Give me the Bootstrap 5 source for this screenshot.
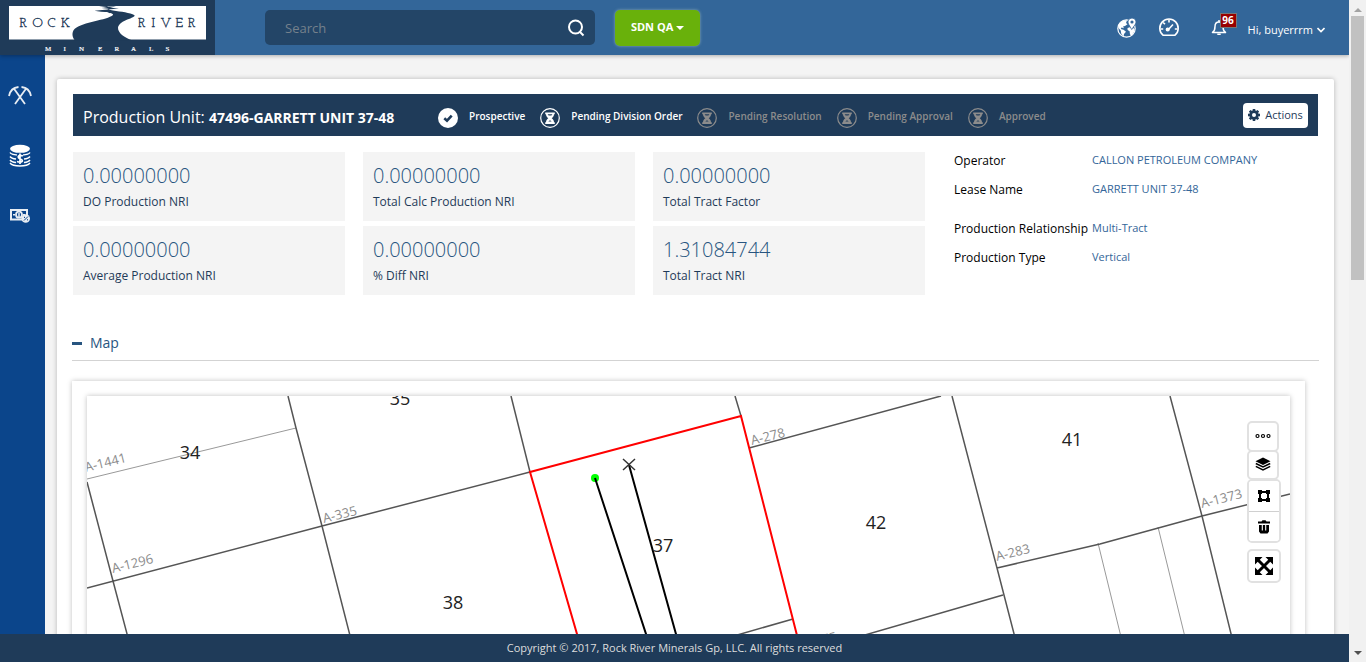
<!DOCTYPE html>
<html lang="en">
<head>
<meta charset="utf-8">
<meta name="viewport" content="width=device-width, initial-scale=1">
<title>Rock River Minerals</title>
<link href="https://cdn.jsdelivr.net/npm/bootstrap@5.3.0/dist/css/bootstrap.min.css" rel="stylesheet">
<style>
body{font-family:"Open Sans",sans-serif;font-size:12px;line-height:18px;color:#000;background:#f4f4f4}
a{text-decoration:none}
svg{display:block}
.topbar{height:55px;background:#369;box-shadow:0 1px 4px rgba(0,0,0,.3);z-index:2}
.brand-box{width:215px;background:#1f3b59}
.search-box{width:330px;height:35px;margin-left:50px;background:#234567;border-radius:5px}
.search-box input{font-size:13px;line-height:18px;color:#fff;padding:0 0 0 20px}
.search-box input::placeholder{color:#75818c;opacity:1}
.org-btn{width:85px;height:36px;margin-left:20px;background:#69b10b;color:#fff;font-size:11px;font-weight:700;border-radius:5px;box-shadow:0 0 3px rgba(200,220,200,.6);padding:0}
.org-btn:hover{background:#5c9c09;color:#fff}
.tools{margin-right:24px}
.tools svg{color:#fff}
.gauge{margin-left:20px}
.bell{margin-left:31px}
.count{position:absolute;left:9px;top:-6px;width:17px;height:15px;background:#900;border:1px solid #777;color:#fff;font-size:10px;line-height:13px;font-weight:700;text-align:center}
.user-btn{margin-left:21px;color:#fff;font-size:11px;line-height:20px}
.sidebar{width:45px;background:#0b458b;padding:29px 5px 0 0;gap:37px}
.content{padding:24px 15px 0 12px}
.panel{background:#fff;border-radius:2px;box-shadow:0 0 5px rgba(0,0,0,.25);padding:15px 15px 40px}
.unit-bar{height:42px;margin:0 1px;padding:0 10px;background:#1f3b59;color:#fff}
.unit-title{width:355px;padding-top:4px;font-size:16px;line-height:24px;font-weight:400}
.unit-title strong{font-size:14px}
.stages{gap:15px;padding-top:6px;font-size:10px;font-weight:600}
.stage{gap:11px;color:#fff}
.stage span{margin-top:-4px}
.stage.waiting{color:#8c8c8c}
.act-btn{width:65px;height:25px;background:#fff;color:#1f3b59;font-size:11px;border-radius:4px;padding:0;gap:5px}
.metrics{display:grid;grid-template-columns:repeat(3,1fr);gap:5px 18px}
.metric{height:69px;background:#f4f4f4;padding:12px 10px}
.metric b{display:block;font-size:20px;line-height:24px;font-weight:300;color:#285580}
.metric span{display:block;line-height:18px;margin-top:5px;color:#1f3b59}
.summary{margin:16px 1px 0}
.info{width:364px;margin-left:29px}
.info dl{display:grid;grid-template-columns:138px 1fr;grid-auto-rows:29px;margin:0 0 10px}
.info dt{font-weight:400;white-space:nowrap}
.info dd{margin:0;font-size:11px;line-height:16px}
.info a{color:#369}
.section-head{margin-top:38px;height:28px;border-bottom:1px solid #d3d3d3}
.section-head button{font-size:14px;line-height:20px;color:#285580;gap:8px}
.map-card{margin:20px 14px 0 0;padding:15px;background:#fff;box-shadow:0 0 5px rgba(0,0,0,.25)}
.map-view{height:400px;box-shadow:0 0 5px rgba(0,0,0,.25);overflow:hidden}
.map-view > svg{width:100%;height:100%}
.map-tools{position:absolute;right:9px;top:25px;width:34px}
.map-tools button{background:#fff;border:2px solid #e1e1e1;border-radius:5px;padding:0;height:31px;color:#000;display:flex;align-items:center;justify-content:center;width:32px}
.map-tools .m-layers{height:30px;margin-top:-2px}
.map-tools .m-group{border:2px solid #e1e1e1;border-radius:5px;overflow:hidden;background:#fff;width:34px;margin-top:-1px}
.map-tools .m-group button{border:0;border-radius:0;height:30px;width:30px}
.map-tools .m-group button + button{border-top:1px solid #d0d0d0}
.map-tools .m-full{height:34px;width:34px;margin-top:6px}
.copy-bar{height:28px;background:#1f3b59;color:#ddd;font-size:11px;z-index:2}
.track{width:17px;background:#f1f1f1;padding:7px 2px}
.thumb{height:264px;width:13px;background:#c1c1c1}
.l-main{stroke:#555;stroke-width:1.5;fill:none}
.l-thin{stroke:#999;stroke-width:1;fill:none}
.l-unit{stroke:#f00;stroke-width:2;fill:none}
.l-well{stroke:#000;stroke-width:2;fill:none}
.t-sec{font-size:18px;fill:#222;text-anchor:middle}
.t-abs{font-size:13px;fill:#8c8c8c}
</style>
</head>
<body class="d-flex vh-100 overflow-hidden">
<svg width="0" height="0" class="position-absolute" aria-hidden="true">
  <symbol id="hourglass" viewBox="0 0 20 20">
    <circle cx="10" cy="10" r="9.3" fill="none" stroke="currentColor" stroke-width="1.2"/>
    <path d="M5.200 4.500h9.600v1.800h-.8c0 2-1 2.900-2.300 3.900 1.300 1 2.300 2 2.300 4h.8v1.800H5.200v-1.800H6c0-2 1-3 2.300-4C7 9.200 6 8.300 6 6.300h-.8z" fill="currentColor"/>
    <path d="M7.600 6.300h4.800L11.400 7.600H8.600zM8.300 13.600l1.700-1.300 1.700 1.300z" fill="#1f3b59"/>
  </symbol>
</svg>

<div class="d-flex flex-column flex-fill overflow-hidden">
  <header class="topbar d-flex align-items-center position-relative flex-shrink-0">
    <a href="#" class="brand-box h-100" aria-label="Rock River Minerals">
      <svg width="215" height="55" viewBox="0 0 215 55">
        <path d="M9 6h197v33.500H9z" fill="#fff"/>
        <path d="M99 6.800l8-.8 1 .5h8l-6 1.200 9 .9-11 1 5 .8c8 1.300 17 2 21.500 4.800 1.500 3-15 4.500-16.500 12.300-.3 5 6 10.500 15 13H75c-3-3-3.500-8.500-.5-11.500C83 21.500 107 20.500 113 15c.5-1.500-3-2-6-2.200l2-.8c-5-.2-11-.3-14.500-1.300l13-1.200 1-.7-7-.7 6-.8z" fill="#1f3b59"/>
        <g font-family="'Josefin Slab','Liberation Serif',serif" fill="#1f3b59" stroke="#1f3b59" stroke-width=".4" font-size="13"><text y="27" x="19.500 32.500 47.500 61">ROCK</text><text y="27" x="138 151.500 160.500 175.500 188">RIVER</text></g>
        <text font-family="'Liberation Serif',serif" font-size="7" fill="#fff" stroke="#fff" stroke-width=".2" y="51" x="45 63.500 79 98 114.500 131 149 165.500">MINERALS</text>
      </svg>
    </a>
    <form class="search-box d-flex align-items-center">
      <input type="text" class="border-0 bg-transparent flex-fill" style="outline:0" placeholder="Search" aria-label="Search">
      <button type="button" class="btn p-0 border-0 me-2" aria-label="Run search">
        <svg width="22" height="22" viewBox="0 0 22 22" fill="none" stroke="#fff" stroke-width="2"><circle cx="10.500" cy="10" r="6.500"/><path d="M14.500 14.500l4 4"/></svg>
      </button>
    </form>
    <button type="button" class="btn org-btn border-0">SDN QA <svg class="d-inline" width="8" height="4" viewBox="0 0 8 4"><path d="M0 0h8L4 4z" fill="#fff"/></svg></button>
    <div class="tools d-flex align-items-center ms-auto">
      <a href="#" aria-label="Map explorer"><svg width="22" height="22" viewBox="0 0 22 22"><circle cx="10.500" cy="11.500" r="8.700" fill="none" stroke="currentColor" stroke-width="1.200"/><path d="M2.500 8C4.500 4.500 8 2.800 11 3.500l-1 2.500 1.500 1.200L9 9l-2 .6 1 1.600-2.500-.7-.7 1.500 2.700.8 2.500 2-2 2.200-.4 2.800-2.300-3-.6-3.300-2.200-2.500zM11.500 11l4-1.300 3 2.300-.5 3-2.200 3.500-1.800-1-.4-3.200-2-1.300z" fill="currentColor"/><path d="M15.700 12.500L12.500 7a4 4 0 1 1 7 0z" fill="currentColor" stroke="#369" stroke-width=".8"/><circle cx="16" cy="5" r="1.600" fill="#369"/></svg></a>
      <a href="#" class="gauge" aria-label="Dashboard"><svg width="22" height="22" viewBox="0 0 22 22" fill="none" stroke="currentColor" stroke-width="1.600"><path d="M5 18.200a9.200 9.200 0 1 1 12 0z"/><path d="M11 2.500v3M5 5.500l2 1.700M2.500 12h2.700M19.500 12h-2.700M9.500 13.500L15 7.500"/><circle cx="9.700" cy="12.500" r="1.300" fill="currentColor"/></svg></a>
      <a href="#" class="bell position-relative" aria-label="Notifications, 96 new"><svg width="16" height="18" viewBox="0 0 16 18"><path d="M1.500 13.500c2-1.300 2.500-3 2.500-6C4 4.500 5.500 3 8 3s4 1.500 4 4.500c0 3 .5 4.700 2.500 6z" fill="none" stroke="currentColor" stroke-width="1.500" stroke-linejoin="round"/><path d="M8 1v2M6.300 15.200h3.400" stroke="currentColor" stroke-width="1.500"/></svg><span class="count">96</span></a>
      <button type="button" class="btn user-btn border-0 p-0 pt-1 d-flex align-items-center gap-1">Hi, buyerrrm <svg width="8" height="6" viewBox="0 0 8 6" fill="none" stroke="currentColor" stroke-width="1.600"><path d="M.5 1L4 4.500 7.500 1"/></svg></button>
    </div>
  </header>

  <div class="d-flex flex-fill overflow-hidden">
    <nav class="sidebar d-flex flex-column align-items-center flex-shrink-0" aria-label="Main">
      <a href="#" aria-label="Production"><svg width="24" height="23" viewBox="0 0 24 23" fill="none" stroke="#e8edf3" stroke-width="1.800"><path d="M5.500 4l11.500 16M18.500 4L7 20"/><path d="M1 12C2 7 5 3.500 10.500 3M23 12C22 7 19 3.500 13.500 3"/></svg></a>
      <a href="#" aria-label="Revenue"><svg width="22" height="23" viewBox="0 0 22 23"><ellipse cx="11" cy="4.800" rx="10" ry="4" fill="#fff"/><path d="M1 8.500c1 2 5 2.500 10 2.500s9-.5 10-2.500M1 12.500c1 1.500 3 2.200 6 2.500M21 12.500c-1 1.500-3 2.200-6 2.500M1 16c1 1.500 3 2.200 6 2.500M21 16c-1 1.500-3 2.200-6 2.500M1 19c2 2.500 6 3 10 3s8-.5 10-3" fill="none" stroke="#fff" stroke-width="1.400"/><path d="M8 9.500h6v10.500H8z" fill="#0b458b"/><path d="M13.800 12c-4-2-6.300 1.300-2.800 2.800 4.500 1.500 2 4.700-3 2.700M11 9.500v10.500" stroke="#fff" stroke-width="1.700" fill="none"/></svg></a>
      <a href="#" aria-label="Payments"><svg width="20" height="23" viewBox="0 0 20 23"><path d="M1 6h16v9.500H1z" fill="none" stroke="#e8edf3" stroke-width="2"/><circle cx="9" cy="10.700" r="3" fill="none" stroke="#e8edf3" stroke-width="1.800"/><path d="M9 9v4M3 10.700h2M13 10.700h2" stroke="#e8edf3" stroke-width="1.500"/><circle cx="15.700" cy="14.500" r="4.300" fill="#e8edf3"/><path d="M14 16.500l4-4M14.500 12.800v1.200M17.500 15.200v1.200" stroke="#0b458b"/></svg></a>
    </nav>

    <main class="content flex-fill overflow-hidden">
      <div class="panel">
        <div class="unit-bar d-flex align-items-center">
          <h1 class="unit-title mb-0 flex-shrink-0">Production Unit: <strong>47496-GARRETT UNIT 37-48</strong></h1>
          <div class="stages d-flex align-items-center text-nowrap">
            <div class="stage d-flex align-items-center"><svg width="20" height="20" viewBox="0 0 20 20"><circle cx="10" cy="10" r="10" fill="#fff"/><path d="M6.300 10.200L9 12.600l4.700-5" fill="none" stroke="#1f3b59" stroke-width="2.600"/></svg><span>Prospective</span></div>
            <div class="stage d-flex align-items-center"><svg width="20" height="20"><use href="#hourglass"/></svg><span>Pending Division Order</span></div>
            <div class="stage waiting d-flex align-items-center"><svg width="20" height="20"><use href="#hourglass"/></svg><span>Pending Resolution</span></div>
            <div class="stage waiting d-flex align-items-center"><svg width="20" height="20"><use href="#hourglass"/></svg><span>Pending Approval</span></div>
            <div class="stage waiting d-flex align-items-center"><svg width="20" height="20"><use href="#hourglass"/></svg><span>Approved</span></div>
          </div>
          <button type="button" class="btn act-btn border-0 ms-auto d-flex align-items-center justify-content-center">
            <svg width="12" height="12" viewBox="0 0 12 12"><g fill="#1f3b59"><circle cx="6" cy="6" r="4.500"/><path id="tooth" d="M4.800 0h2.400l.4 2.500H4.400zM4.400 9.500h3.200L7.200 12H4.800z"/><use href="#tooth" transform="rotate(45 6 6)"/><use href="#tooth" transform="rotate(90 6 6)"/><use href="#tooth" transform="rotate(135 6 6)"/></g><circle cx="6" cy="6" r="2" fill="#fff"/></svg>Actions</button>
        </div>

        <div class="summary d-flex">
          <div class="metrics flex-fill">
            <div class="metric"><b>0.00000000</b><span>DO Production NRI</span></div>
            <div class="metric"><b>0.00000000</b><span>Total Calc Production NRI</span></div>
            <div class="metric"><b>0.00000000</b><span>Total Tract Factor</span></div>
            <div class="metric"><b>0.00000000</b><span>Average Production NRI</span></div>
            <div class="metric"><b>0.00000000</b><span>% Diff NRI</span></div>
            <div class="metric"><b>1.31084744</b><span>Total Tract NRI</span></div>
          </div>
          <div class="info flex-shrink-0">
            <dl><dt>Operator</dt><dd><a href="#">CALLON PETROLEUM COMPANY</a></dd><dt>Lease Name</dt><dd><a href="#">GARRETT UNIT 37-48</a></dd></dl>
            <dl><dt>Production Relationship</dt><dd><a href="#">Multi-Tract</a></dd><dt>Production Type</dt><dd><a href="#">Vertical</a></dd></dl>
          </div>
        </div>

        <div class="section-head">
          <button type="button" class="btn border-0 p-0 d-flex align-items-center"><svg width="10" height="3"><path d="M0 0h10v3H0z" fill="#285580"/></svg>Map</button>
        </div>

        <div class="map-card">
          <div class="map-view position-relative">
            <svg viewBox="87 396 1203 400" preserveAspectRatio="xMinYMin slice" role="img" aria-label="Tract map">
              <g class="l-thin"><path d="M87 479L296 428M1098 543L1160 796M1158 527L1224 796"/></g>
              <g class="l-main"><path d="M288 396L296 428 322 526 391 796M87 482L113 581 170 796M87 588L322 526 530 472M511 396L530 472M735 396L741 416M749 448L941 396M650 660L793 619M820 648L1003 595M952 396L997 568 1056 796M997 568L1100 544 1202 516 1290 494M1170 396L1202 516 1271 796"/></g>
              <g class="t-abs">
                <text transform="translate(86 472) rotate(-14)">A-1441</text>
                <text transform="translate(113 573) rotate(-14)">A-1296</text>
                <text transform="translate(324 523) rotate(-14)">A-335</text>
                <text transform="translate(752 445) rotate(-14)">A-278</text>
                <text transform="translate(997 561) rotate(-14)">A-283</text>
                <text transform="translate(1202 508) rotate(-14)">A-1373</text>
                <text transform="translate(804 649) rotate(-14)">A-275</text>
              </g>
              <path class="l-unit" d="M624 796L530 472 741 416 838 796"/>
              <circle cx="595" cy="478" r="4" fill="#0f0"/>
              <path class="l-well" d="M595 478L699 796M629 465L721 796"/>
              <path d="M623 459l12 11M635 459l-12 11" stroke="#333" stroke-width="1.500"/>
              <g class="t-sec">
                <text x="190" y="459">34</text><text x="400" y="405">35</text><text x="453" y="609">38</text>
                <text x="663" y="552">37</text><text x="876" y="529">42</text><text x="1072" y="446">41</text>
              </g>
            </svg>
            <div class="map-tools">
              <button type="button" aria-label="More"><svg width="16" height="8" viewBox="0 0 16 8" fill="none" stroke="#000" stroke-width="1.200"><circle cx="2.500" cy="3" r="1.500"/><circle cx="8" cy="3" r="1.500"/><circle cx="13.500" cy="3" r="1.500"/></svg></button>
              <button type="button" class="m-layers" aria-label="Layers"><svg width="16" height="16" viewBox="0 0 16 16"><path d="M8 .5L15.500 4.300 8 8 .5 4.300z"/><path d="M.8 6.500L8 10l7.200-3.500M.8 9.300L8 12.800l7.200-3.500" fill="none" stroke="#000" stroke-width="1.500"/></svg></button>
              <div class="m-group">
                <button type="button" aria-label="Draw area"><svg width="12" height="12" viewBox="0 0 12 12"><path d="M2 2h8v8H2z" fill="none" stroke="#000" stroke-width="2"/><path d="M0 0h4v4H0zM8 0h4v4H8zM0 8h4v4H0zM8 8h4v4H8z"/></svg></button>
                <button type="button" aria-label="Delete"><svg width="12" height="14" viewBox="0 0 12 14"><path d="M0 1.500h3.500L4.500.3h3l1 1.200H12v2H0zM1 5h10v6.500l-1.500 2h-7L1 11.500z"/><path d="M4.300 5v5.500M7.700 5v5.500" stroke="#fff" stroke-width="1.100"/></svg></button>
              </div>
              <button type="button" class="m-full" aria-label="Full screen"><svg width="18" height="18" viewBox="0 0 18 18"><path d="M0 0h7.500L0 7.500zM18 0v7.500L10.500 0zM0 18v-7.500L7.500 18zM18 18h-7.500l7.500-7.500z"/><path d="M2 2l14 14M16 2L2 16" stroke="#000" stroke-width="3"/></svg></button>
            </div>
          </div>
        </div>
      </div>
    </main>
  </div>

  <footer class="copy-bar d-flex align-items-center justify-content-center flex-shrink-0">Copyright © 2017, Rock River Minerals Gp, LLC. All rights reserved</footer>
</div>

<div class="track d-flex flex-column align-items-center flex-shrink-0" aria-hidden="true">
  <svg width="8" height="5" class="mb-1"><path d="M0 5h8L4 1z" fill="#a3a3a3"/></svg>
  <div class="thumb"></div>
  <svg width="8" height="4" class="mt-auto"><path d="M0 0h8L4 4z" fill="#505050"/></svg>
</div>
<script src="https://cdn.jsdelivr.net/npm/bootstrap@5.3.0/dist/js/bootstrap.bundle.min.js"></script>
</body>
</html>
